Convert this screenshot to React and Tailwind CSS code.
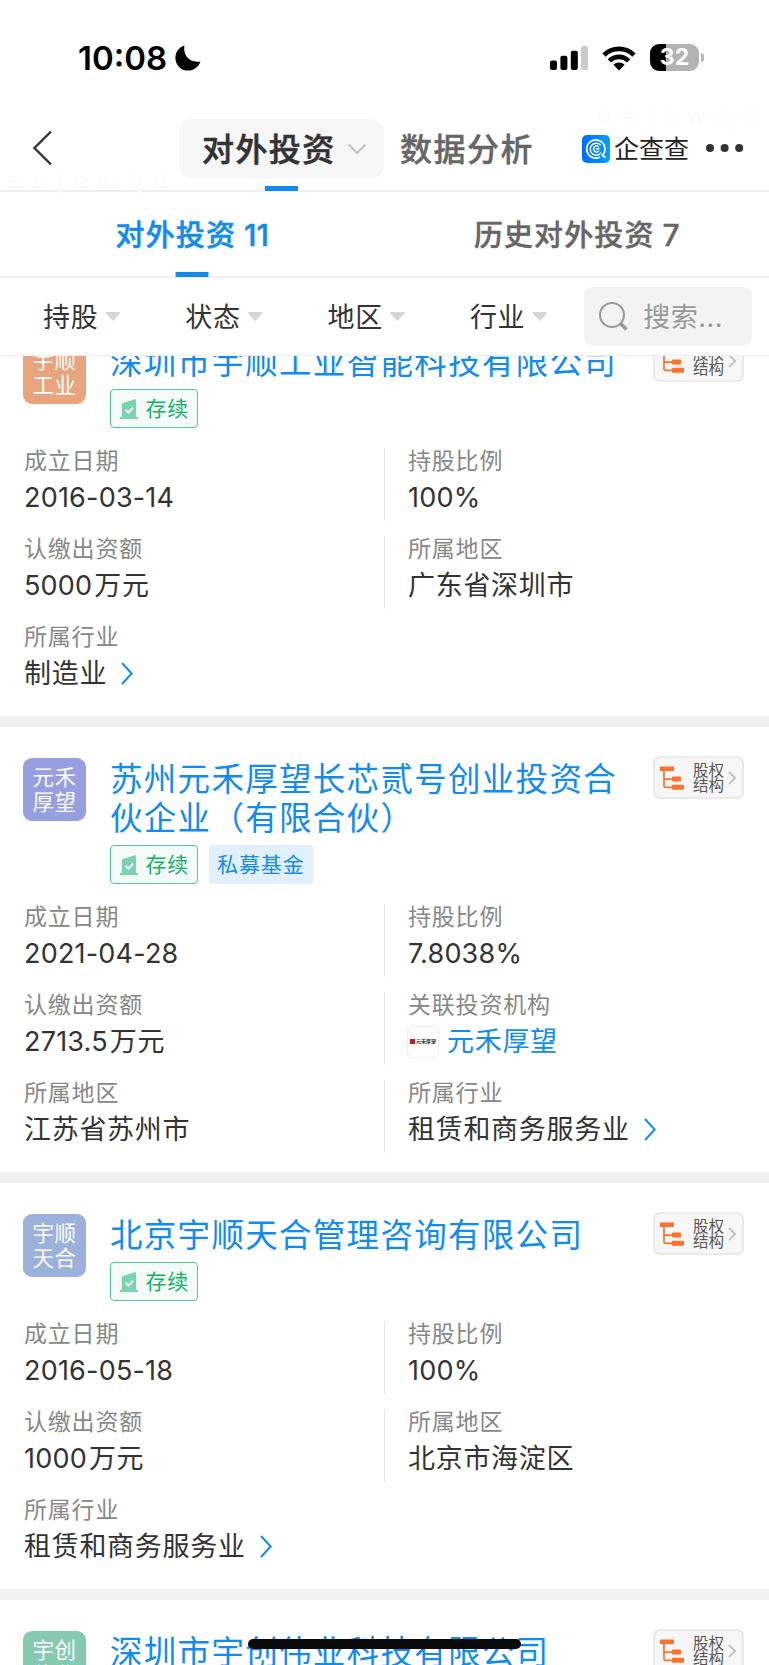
import React from "react";
import clsx from "clsx";

const FILTERS = ["持股", "状态", "地区", "行业"];

const COMPANIES = [
  {
    id: 1,
    badge: ["宇顺", "工业"],
    badgeColor: "bg-[#e8a47c]",
    name: "深圳市宇顺工业智能科技有限公司",
    tags: [],
    fields: [
      { label: "成立日期", value: "2016-03-14" },
      { label: "持股比例", value: "100%" },
      { label: "认缴出资额", value: "5000", unit: "万元" },
      { label: "所属地区", value: "广东省深圳市" },
      { label: "所属行业", value: "制造业", arrow: true },
    ],
  },
  {
    id: 2,
    badge: ["元禾", "厚望"],
    badgeColor: "bg-[#979fe0]",
    name: "苏州元禾厚望长芯贰号创业投资合伙企业（有限合伙）",
    tags: ["私募基金"],
    fields: [
      { label: "成立日期", value: "2021-04-28" },
      { label: "持股比例", value: "7.8038%" },
      { label: "认缴出资额", value: "2713.5", unit: "万元" },
      { label: "关联投资机构", value: "元禾厚望", logo: true },
      { label: "所属地区", value: "江苏省苏州市" },
      { label: "所属行业", value: "租赁和商务服务业", arrow: true },
    ],
  },
  {
    id: 3,
    badge: ["宇顺", "天合"],
    badgeColor: "bg-[#9bb1dc]",
    name: "北京宇顺天合管理咨询有限公司",
    tags: [],
    fields: [
      { label: "成立日期", value: "2016-05-18" },
      { label: "持股比例", value: "100%" },
      { label: "认缴出资额", value: "1000", unit: "万元" },
      { label: "所属地区", value: "北京市海淀区" },
      { label: "所属行业", value: "租赁和商务服务业", arrow: true },
    ],
  },
  {
    id: 4,
    badge: ["宇创", "伟业"],
    badgeColor: "bg-[#85c9b0]",
    name: "深圳市宇创伟业科技有限公司",
    tags: [],
    fields: [],
  },
];

function StatusBar() {
  return (
    <div className="flex h-[115px] items-center pl-[78px] pr-[66px] text-black">
      <span className="font-[Inter] text-[33px] leading-[40px] font-semibold">10:08</span>
      <svg className="ml-[8px] h-[26px] w-[26px]" viewBox="0 0 26 26">
        <path
          d="M9.5 0.5C7.6 8.8 13.6 18.6 25.5 16.4C23.4 22.2 18.5 25.6 13 25.6C6 25.6 0.4 19.9 0.4 12.9C0.4 7.1 4 2.2 9.5 0.5Z"
          fill="currentColor"
        />
      </svg>

      <div className="ml-auto flex items-center">
        {/* Signal */}
        <svg className="h-[26px] w-[38px]" viewBox="0 0 38 26">
          <rect x="0" y="15.5" width="7" height="9.5" rx="2" />
          <rect x="10.4" y="10.8" width="7" height="14.2" rx="2" />
          <rect x="20.8" y="5.8" width="7" height="19.2" rx="2" />
          <rect x="31" y="1" width="7" height="24" rx="2" fill="#cbcbcb" />
        </svg>
        {/* Wi-Fi */}
        <svg className="ml-[14px] h-[26px] w-[34px]" viewBox="0 0 34 26">
          <g fill="none" stroke="currentColor" strokeWidth="4.6">
            <path d="M2 10A21.4 21.4 0 0 1 32 10" />
            <path d="M7.3 15.9A13.6 13.6 0 0 1 26.7 15.9" />
          </g>
          <path d="M17 25.4L11.4 19.8A7.8 7.8 0 0 1 22.6 19.8Z" />
        </svg>
        {/* Battery */}
        <div className="ml-[14px] flex h-[27px] w-[49px] items-center justify-center rounded-[9px] bg-[linear-gradient(90deg,#000_32%,#b3b3b3_32%)] font-[Inter] text-[23px] leading-none font-bold text-white">
          32
        </div>
        <div className="-mr-px ml-[2px] h-[9px] w-[3px] rounded-r-full bg-[#b8b8b8]" />
      </div>
    </div>
  );
}

function BrandLogo() {
  return (
    <svg className="h-[28px] w-[28px]" viewBox="0 0 28 28">
      <defs>
        <linearGradient id="brand" x1="0" x2="1" y1="0" y2="0">
          <stop offset="0" stopColor="#0069ff" />
          <stop offset="1" stopColor="#00a2ff" />
        </linearGradient>
      </defs>
      <rect width="28" height="28" rx="5" fill="url(#brand)" />
      <g fill="none" stroke="#fff" strokeLinecap="round">
        <path d="M20.6 20.1A9.1 9.1 0 1 0 17.6 22.3" strokeWidth="1.7" />
        <path d="M20.3 20.3L23 22.3" strokeWidth="1.7" />
        <path d="M18.8 18.1A6 6 0 1 1 18.3 9.8" strokeWidth="1.4" />
        <path d="M16.5 11.7A3 3 0 1 0 16.5 16.3M14.4 14H17" strokeWidth="1.4" />
      </g>
    </svg>
  );
}

function NavBar() {
  return (
    <div className="relative flex h-[77px] items-start border-b-2 border-[#f0f0f0] pl-[32px]">
      <span className="absolute -top-[13px] left-[597px] font-[Inter] text-[25px] leading-[28px] tracking-[10px] text-[#fcfcfc]">
        eejewqd
      </span>
      <span className="absolute top-[51px] left-[8px] font-[Inter] text-[25px] leading-[28px] tracking-[10px] text-[#fcfcfc]">
        eejewqd
      </span>
      <button type="button" aria-label="返回" className="mt-[15px]">
        <svg className="h-[36px] w-[21px]" viewBox="0 0 21 36">
          <path d="M19 1.5L2.5 18L19 34.5" fill="none" stroke="#333" strokeWidth="2.4" />
        </svg>
      </button>

      <button
        type="button"
        className="relative ml-[126px] mt-1 flex h-[59px] w-[205px] items-center rounded-xl bg-[#f7f7f7] pl-[23px]"
      >
        <span className="pt-[2px] text-[32px] leading-[40px] font-medium tracking-[1.4px] text-[#333] [-webkit-text-stroke:0.6px_#333]">
          对外投资
        </span>
        <svg className="ml-[11px] h-[12px] w-[20px]" viewBox="0 0 20 12">
          <path d="M1.5 1.5L10 10L18.5 1.5" fill="none" stroke="#c4c4c4" strokeWidth="2.2" />
        </svg>
        <span className="absolute top-[67px] left-[86px] h-[5px] w-[33px] bg-[#128bed]" />
      </button>

      <span className="mt-[15px] ml-[16px] w-[134px] text-[32px] leading-[40px] font-medium tracking-[1.5px] whitespace-nowrap text-[#666] [-webkit-text-stroke:0.4px_#666]">
        数据分析
      </span>

      <div className="mt-[19px] ml-[48px] flex items-center">
        <BrandLogo />
        <span className="ml-[4px] w-[77px] pt-px text-[25px] leading-[28px] whitespace-nowrap text-[#222]">
          企查查
        </span>
      </div>
      <svg className="mt-[28px] ml-[14px] h-[10px] w-[40px]" viewBox="0 0 40 10" fill="#333">
        <circle cx="5" cy="5" r="4" />
        <circle cx="19.6" cy="5" r="4" />
        <circle cx="34.2" cy="5" r="4" />
      </svg>
    </div>
  );
}

function Tab({ label, count, active }) {
  return (
    <div
      className={clsx(
        "relative flex flex-1 items-center justify-center pt-[3px] text-[29px] font-medium",
        active
          ? "text-[#128bed] [-webkit-text-stroke:0.5px_#128bed]"
          : "text-[#666] [-webkit-text-stroke:0.4px_#666]"
      )}
    >
      <span className="tracking-[1.1px]">{label}</span>
      <span className="ml-[8px] text-[30px]">{count}</span>
      {active && (
        <span className="absolute -bottom-px left-1/2 h-[5px] w-[33px] -translate-x-1/2 bg-[#128bed]" />
      )}
    </div>
  );
}

function FilterBar() {
  return (
    <div className="flex h-[78px] items-center border-b border-[#eee] pl-[43px]">
      {FILTERS.map((name) => (
        <div key={name} className="flex w-[142.3px] shrink-0 items-center">
          <span className="pt-[2px] text-[27px] leading-[36px] tracking-[0.7px] text-[#333]">{name}</span>
          <span className="ml-[7px] h-[9px] w-[15px] bg-[#d6d6d6] [clip-path:polygon(6%_0,94%_0,100%_12%,50%_100%,0_12%)]" />
        </div>
      ))}
      <div className="-ml-[28px] flex h-[59px] w-[168px] shrink-0 items-center rounded-[9px] bg-[#f3f3f3] pl-[14px]">
        <svg className="h-[31px] w-[31px]" viewBox="0 0 31 31" fill="none" stroke="#999">
          <circle cx="14" cy="14" r="12" strokeWidth="2" />
          <path d="M22.5 22.5L28.5 28.5" strokeWidth="3.4" />
        </svg>
        <span className="ml-[14px] pt-[2px] text-[27px] leading-[36px] tracking-[0.5px] text-[#999]">
          搜索...
        </span>
      </div>
    </div>
  );
}

function StructureButton() {
  return (
    <button
      type="button"
      className="-mt-[2px] flex h-[43px] w-[91px] shrink-0 items-center rounded-[7px] border-2 border-[#eaeaea] bg-[#f7f7f7] pl-[5px]"
    >
      <svg className="h-[24px] w-[24px]" viewBox="0 0 24 24" fill="#ff722d">
        <rect x="0" y="0.5" width="14" height="4.5" rx="0.8" />
        <path d="M4 5V20Q4 21.4 5.4 21.4H12M4 13.2H12" fill="none" stroke="#ff722d" strokeWidth="1.7" />
        <rect x="12" y="10.6" width="9" height="5" rx="0.8" />
        <rect x="12" y="18.8" width="12" height="5" rx="0.8" />
      </svg>
      <span className="ml-[9px] w-[32px] pt-px text-left text-[15.5px] leading-[15.5px] text-[#555]">
        股权
        <br />
        结构
      </span>
      <svg className="ml-[3px] h-[14px] w-[8px]" viewBox="0 0 8 14">
        <path d="M1 1L7 7L1 13" fill="none" stroke="#bbb" strokeWidth="1.7" />
      </svg>
    </button>
  );
}

function StatusTag() {
  return (
    <span className="flex h-[39px] w-[88px] items-center rounded-[4px] border-[1.5px] border-[#52c795] bg-[#f5fbf9] pl-[9px]">
      <svg className="h-[20px] w-[18px]" viewBox="0 0 18 20">
        <path d="M2 18V5Q2 4.2 2.8 3.9L15 0.3Q16 0 16 1V18H18V20H0V18Z" fill="#7bd4b0" />
        <path d="M5.5 10.8L8.5 13.6L13 8.6" fill="none" stroke="#fff" strokeWidth="1.9" />
      </svg>
      <span className="ml-[8px] text-[21px] leading-[30px] tracking-[0.8px] whitespace-nowrap text-[#12b26a]">
        存续
      </span>
    </span>
  );
}

function Field({ field, divided }) {
  const numeric = /^[\d.%-]+$/.test(field.value);

  return (
    <div className={clsx("h-[73px]", divided ? "border-l border-[#e8e8e8] pl-[23px]" : "pl-[24px]")}>
      <div className="h-[25px] pt-px text-[23px] leading-[25px] tracking-[0.8px] text-[#888]">
        {field.label}
      </div>
      <div className="mt-[6px] flex h-[37px] items-center text-[27px] leading-[36px] whitespace-nowrap">
        {field.logo && (
          <span className="-ml-px mr-[8px] flex h-[32px] w-[32px] items-center rounded-[6px] border border-[#eee] pl-[2px]">
            <span className="h-[5px] w-[5px] bg-[#b81f24]" />
            <span className="ml-px font-['Liberation_Serif','Noto_Sans_CJK_SC',serif] text-[5px] leading-[6px] font-bold text-[#333]">
              元禾厚望
            </span>
          </span>
        )}
        <span
          className={clsx(
            numeric ? "tracking-[0.2px]" : "tracking-[0.7px]",
            field.logo ? "text-[#128bed]" : "text-[#333]"
          )}
        >
          {field.value}
        </span>
        {field.unit && <span className="ml-[2px] tracking-[0.6px] text-[#333]">{field.unit}</span>}
        {field.arrow && (
          <svg className="-mt-px ml-[14px] h-[23px] w-[12px]" viewBox="0 0 12 23">
            <path d="M1 1L10.7 11.5L1 22" fill="none" stroke="#128bed" strokeWidth="2" />
          </svg>
        )}
      </div>
    </div>
  );
}

function CompanyCard({ company }) {
  return (
    <div className="border-b-[11px] border-[#f2f2f2] pt-[31px] pb-[19px]">
      <div className="flex items-start pr-[25px] pl-[23px]">
        <div
          className={clsx(
            "flex h-[63px] w-[63px] shrink-0 flex-col items-center justify-center rounded-[9px] pt-px text-[21.5px] leading-[25.5px] tracking-[0.5px] text-white",
            company.badgeColor
          )}
        >
          <span>{company.badge[0]}</span>
          <span>{company.badge[1]}</span>
        </div>
        <div className="mr-[20px] ml-[24px] flex-1">
          <div className="pt-[2px] w-[512px] text-[32.5px] leading-[39px] tracking-[1.3px] text-[#128bed]">
            {company.name}
          </div>
          <div className="mt-[7px] -ml-[0.5px] flex h-[39px] gap-[11.5px]">
            <StatusTag />
            {company.tags.map((tag) => (
              <span
                key={tag}
                className="flex h-[39px] items-center rounded-[4px] bg-[#e2f0fd] px-[8px] text-[21px] tracking-[0.9px] text-[#128bed]"
              >
                {tag}
              </span>
            ))}
          </div>
        </div>
        <StructureButton />
      </div>

      <div className="mt-5 grid grid-cols-[384px_1fr] gap-y-[15px]">
        {company.fields.map((field, i) => (
          <Field key={field.label} field={field} divided={i % 2 === 1} />
        ))}
      </div>
    </div>
  );
}

export default function App() {
  return (
    <div className="relative flex h-[1665px] w-[769px] flex-col overflow-hidden bg-white font-[Inter,'Noto_Sans_CJK_SC',sans-serif]">
      <StatusBar />
      <NavBar />
      <div className="flex h-[86px] shrink-0 border-b-2 border-[#f0f0f0]">
        <Tab label="对外投资" count={11} active />
        <Tab label="历史对外投资" count={7} />
      </div>
      <FilterBar />

      {/* Scrolled list, the first card is partly under the filter bar */}
      <div className="min-h-0 flex-1 overflow-hidden">
        <div className="-mt-[46px]">
          {COMPANIES.map((company) => (
            <CompanyCard key={company.id} company={company} />
          ))}
        </div>
      </div>

      {/* Home indicator */}
      <div className="absolute bottom-[16px] left-[248px] h-[10px] w-[273px] rounded-full bg-[#0a0a0a]" />
    </div>
  );
}
